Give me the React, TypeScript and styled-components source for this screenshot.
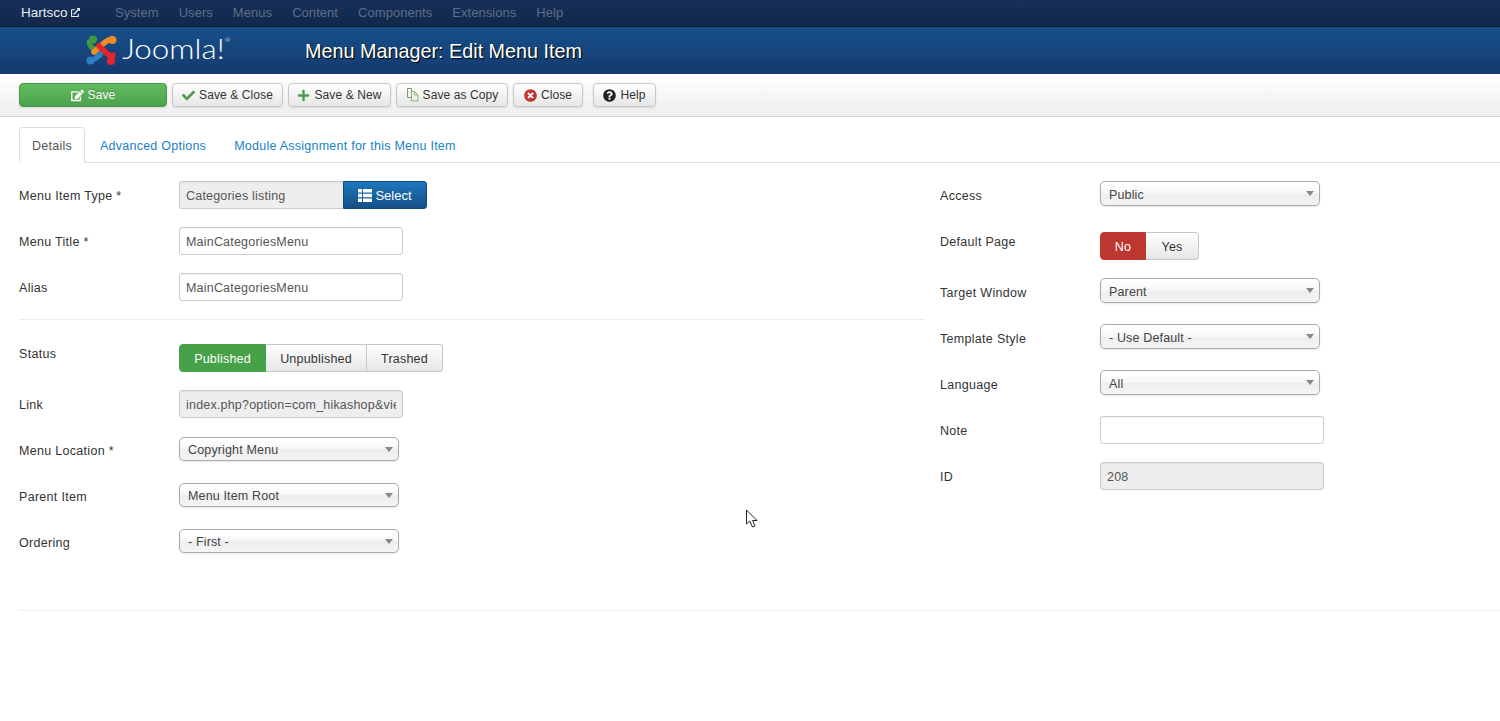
import styled, { createGlobalStyle } from 'styled-components';
import { FaCheck, FaPlus, FaTimesCircle, FaQuestionCircle, FaEdit, FaExternalLinkAlt } from 'react-icons/fa';

const GlobalStyle = createGlobalStyle`
  html, body { margin: 0; padding: 0; background: #fff; }
  body {
    font-family: "Liberation Sans", Arial, sans-serif;
    font-size: 13px;
    color: #333;
  }
`;

const Page = styled.div`
  position: relative;
  height: 721px;
  overflow: hidden;
`;

const TopNav = styled.nav`
  box-sizing: border-box;
  height: 27px;
  display: flex;
  align-items: center;
  padding: 0 0 2px 21px;
  background: linear-gradient(#16305a, #12284a);
  border-bottom: 1px solid #0b1a33;
`;

const Brand = styled.a`
  display: flex;
  align-items: center;
  gap: 3px;
  width: 94px;
  font-size: 13.5px;
  color: #e8edf3;
`;

const NavItem = styled.a`
  margin-right: 20px;
  font-size: 13px;
  letter-spacing: 0.05px;
  color: #5e6e86;
`;

const Header = styled.header`
  height: 47px;
  display: flex;
  align-items: center;
  padding-left: 85px;
  background: linear-gradient(#17508a, #153a6e);
`;

const Logo = styled.div`
  width: 220px;
  display: flex;
  align-items: center;
  gap: 4px;
  color: #fff;
  padding-bottom: 1px;
`;

const Wordmark = styled.span`
  display: inline-block;
  font-family: Lato, "Open Sans", sans-serif;
  font-weight: 300;
  font-size: 28px;
  line-height: 1;
  margin-bottom: 5px;
  transform: scaleX(1.12);
  transform-origin: left center;
`;

const Registered = styled.sup`
  font-size: 6px;
  vertical-align: 17px;
  line-height: 0;
`;

const PageTitle = styled.h1`
  margin: 2px 0 0;
  font-size: 19.8px;
  font-weight: 400;
  color: #fff;
  text-shadow: 1px 1px 1px #000;
`;

const Toolbar = styled.div`
  height: 42px;
  display: flex;
  align-items: center;
  padding: 0 0 0 19px;
  background: linear-gradient(#fff, #eee);
  border-bottom: 1px solid #d4d4d4;
`;

const ToolButton = styled.button<{ $w: number; $after?: number }>`
  box-sizing: border-box;
  width: ${(p) => p.$w}px;
  height: 24px;
  margin-right: ${(p) => p.$after ?? 5}px;
  display: flex;
  align-items: center;
  justify-content: center;
  gap: 4px;
  padding: 0;
  font: 12px "Liberation Sans", Arial, sans-serif;
  letter-spacing: 0.1px;
  color: #333;
  background: linear-gradient(#fff, #e6e6e6);
  border: 1px solid #c8c8c8;
  border-radius: 4px;
  box-shadow: 0 1px 2px rgba(0, 0, 0, 0.1);
`;

const SaveButton = styled(ToolButton)`
  color: #fff;
  background: linear-gradient(#62bb5f, #4aa24c);
  border-color: #46964a;
  text-shadow: 0 -1px 0 rgba(0, 0, 0, 0.2);
`;

const Tabs = styled.div`
  height: 35px;
  margin: 10px 0 18px 19px;
  display: flex;
  border-bottom: 1px solid #ddd;
`;

const Tab = styled.a<{ $active?: boolean }>`
  box-sizing: border-box;
  height: ${(p) => (p.$active ? 36 : 35)}px;
  display: flex;
  align-items: center;
  padding: ${(p) => (p.$active ? '1px 12px 0' : '2px 14px 0')};
  margin-right: ${(p) => (p.$active ? 1 : 0)}px;
  font-size: 12.5px;
  letter-spacing: 0.25px;
  color: ${(p) => (p.$active ? '#555' : '#1a7fc9')};
  background: ${(p) => (p.$active ? '#fff' : 'transparent')};
  border: ${(p) => (p.$active ? '1px solid #ddd' : 'none')};
  border-bottom: ${(p) => (p.$active ? '1px solid #fff' : 'none')};
  border-radius: 4px 4px 0 0;
`;

const Columns = styled.div`
  display: grid;
  grid-template-columns: 906px 1fr;
  column-gap: 15px;
  margin-left: 19px;
`;

const Column = styled.div``;

const Row = styled.div<{ $after?: number }>`
  display: flex;
  min-height: 28px;
  margin-bottom: ${(p) => p.$after ?? 18}px;
`;

const Label = styled.label<{ $tight?: boolean }>`
  width: 160px;
  flex: none;
  padding-top: ${(p) => (p.$tight ? 3 : 8)}px;
  font-size: 12.5px;
  line-height: 14px;
  letter-spacing: 0.3px;
  color: #333;
`;

const Input = styled.input<{ $w?: number }>`
  box-sizing: border-box;
  width: ${(p) => p.$w ?? 224}px;
  height: 28px;
  padding: 1px 6px 0;
  font: 12.5px "Liberation Sans", Arial, sans-serif;
  letter-spacing: 0.2px;
  color: #555;
  background: #fff;
  border: 1px solid #ccc;
  border-radius: 3px;
  box-shadow: inset 0 1px 1px rgba(0, 0, 0, 0.05);
  outline: none;

  &:disabled {
    background: #eee;
    color: #555;
    opacity: 1;
  }
`;

const InputGroup = styled.div`
  display: flex;
`;

const AddOn = styled(Input)`
  width: 164px;
  border-right: 0;
  border-radius: 3px 0 0 3px;
`;

const SelectButton = styled.button`
  box-sizing: border-box;
  width: 84px;
  height: 28px;
  padding: 0;
  display: flex;
  align-items: center;
  justify-content: center;
  gap: 3px;
  font: 13px "Liberation Sans", Arial, sans-serif;
  color: #fff;
  background: linear-gradient(#1e77bd, #154f86);
  border: 1px solid #134a7c;
  border-radius: 0 3px 3px 0;
`;

const Select = styled.div<{ $compact?: boolean }>`
  box-sizing: border-box;
  position: relative;
  width: 220px;
  height: ${(p) => (p.$compact ? 24 : 25)}px;
  margin-top: ${(p) => (p.$compact ? 1 : 0)}px;
  padding: ${(p) => (p.$compact ? '1px 8px 0' : '2px 8px 0')};
  display: flex;
  align-items: center;
  font-size: 12.5px;
  letter-spacing: 0.15px;
  color: #444;
  background: linear-gradient(#fff 10%, #f6f6f6 50%, #eee 52%, #f4f4f4);
  border: 1px solid #aaa;
  border-radius: 5px;
  box-shadow: 0 1px 2px rgba(0, 0, 0, 0.1);

  &::after {
    content: '';
    position: absolute;
    right: 5px;
    top: 9px;
    border-left: 4px solid transparent;
    border-right: 4px solid transparent;
    border-top: 5px solid #888;
  }
`;

const Segmented = styled.div`
  display: flex;
  height: 28px;
`;

const Segment = styled.button<{ $w: number; $tone?: 'green' | 'red' }>`
  box-sizing: border-box;
  width: ${(p) => p.$w}px;
  padding: 2px 0 0;
  font: 12.5px "Liberation Sans", Arial, sans-serif;
  letter-spacing: 0.2px;
  color: ${(p) => (p.$tone ? '#fff' : '#333')};
  background: ${(p) =>
    p.$tone === 'green'
      ? '#46a149'
      : p.$tone === 'red'
        ? '#bd362f'
        : 'linear-gradient(#fff, #e6e6e6)'};
  border: 1px solid ${(p) => (p.$tone === 'green' ? '#46a149' : p.$tone === 'red' ? '#bd362f' : '#c8c8c8')};
  border-left-width: ${(p) => (p.$tone ? 1 : 0)}px;
  &:first-child { border-radius: 4px 0 0 4px; }
  &:last-child { border-radius: 0 4px 4px 0; }
`;

const Rule = styled.hr<{ $top: number; $bottom: number }>`
  margin: ${(p) => p.$top}px 0 ${(p) => p.$bottom}px;
  border: 0;
  border-top: 1px solid #eee;
`;

const BottomRule = styled(Rule)`
  margin-left: 19px;
`;

const Cursor = styled.svg`
  position: absolute;
  left: 745px;
  top: 509px;
`;

const JoomlaMark = () => (
  <svg width="33" height="33" viewBox="0 0 33 33" fill="none" strokeLinecap="round" strokeLinejoin="round">
    <g strokeWidth="5.5">
      <path d="M4.500 8 C4.500 12 6 13 15 21" stroke="#3f9a3e" />
      <circle cx="8" cy="5.500" r="4" fill="#3f9a3e" stroke="none" />
      <path d="M26 5 C22 6 18 9 9 18" stroke="#f08a24" />
      <circle cx="27.500" cy="6" r="4" fill="#f08a24" stroke="none" />
      <path d="M5 26 C8 27 12 24 17 18" stroke="#2f7fc6" />
      <circle cx="5.500" cy="26.500" r="4" fill="#2f7fc6" stroke="none" />
      <path d="M28 21 C28 24 25 23 14 12" stroke="#e3262e" />
      <circle cx="26" cy="27" r="4" fill="#e3262e" stroke="none" />
    </g>
  </svg>
);

const CopyIcon = () => (
  <svg width="13" height="14" viewBox="0 0 13 14" fill="none" strokeWidth="1">
    <path d="M5.500 9.500h-4v-9h4v3" stroke="#7d9a6a" />
    <path d="M5.500 3.500h3l3.500 3.500v6h-6.500z" stroke="#8fb27a" />
    <path d="M8.500 3.500v3.500h3.500" stroke="#8fb27a" />
  </svg>
);

const ListIcon = () => (
  <svg width="14" height="13" viewBox="0 0 14 13" fill="#fff">
    <rect x="0" y="0" width="4" height="3.500" />
    <rect x="5" y="0" width="9" height="3.500" />
    <rect x="0" y="4.750" width="4" height="3.500" />
    <rect x="5" y="4.750" width="9" height="3.500" />
    <rect x="0" y="9.500" width="4" height="3.500" />
    <rect x="5" y="9.500" width="9" height="3.500" />
  </svg>
);

const navItems = ['System', 'Users', 'Menus', 'Content', 'Components', 'Extensions', 'Help'];

export default function App() {
  return (
    <Page>
      <GlobalStyle />
      <TopNav>
        <Brand>
          Hartsco
          <FaExternalLinkAlt size={9} />
        </Brand>
        {navItems.map((item) => (
          <NavItem key={item}>{item}</NavItem>
        ))}
      </TopNav>
      <Header>
        <Logo>
          <JoomlaMark />
          <Wordmark>
            Joomla!<Registered>®</Registered>
          </Wordmark>
        </Logo>
        <PageTitle>Menu Manager: Edit Menu Item</PageTitle>
      </Header>
      <Toolbar>
        <SaveButton $w={148}>
          <FaEdit size={13} />
          Save
        </SaveButton>
        <ToolButton $w={111}>
          <FaCheck size={13} color="#4e9c4e" />
          Save &amp; Close
        </ToolButton>
        <ToolButton $w={103}>
          <FaPlus size={13} color="#4e9c4e" />
          Save &amp; New
        </ToolButton>
        <ToolButton $w={112}>
          <CopyIcon />
          Save as Copy
        </ToolButton>
        <ToolButton $w={70} $after={10}>
          <FaTimesCircle size={13} color="#bd362f" />
          Close
        </ToolButton>
        <ToolButton $w={63}>
          <FaQuestionCircle size={13} color="#222" />
          Help
        </ToolButton>
      </Toolbar>
      <Tabs>
        <Tab $active>Details</Tab>
        <Tab>Advanced Options</Tab>
        <Tab>Module Assignment for this Menu Item</Tab>
      </Tabs>
      <Columns>
        <Column>
          <Row>
            <Label>Menu Item Type *</Label>
            <InputGroup>
              <AddOn disabled value="Categories listing" />
              <SelectButton>
                <ListIcon />
                Select
              </SelectButton>
            </InputGroup>
          </Row>
          <Row>
            <Label>Menu Title *</Label>
            <Input readOnly value="MainCategoriesMenu" />
          </Row>
          <Row $after={0}>
            <Label>Alias</Label>
            <Input readOnly value="MainCategoriesMenu" />
          </Row>
          <Rule $top={18} $bottom={24} />
          <Row>
            <Label $tight>Status</Label>
            <Segmented>
              <Segment $w={87} $tone="green">Published</Segment>
              <Segment $w={101}>Unpublished</Segment>
              <Segment $w={76}>Trashed</Segment>
            </Segmented>
          </Row>
          <Row>
            <Label>Link</Label>
            <Input disabled value="index.php?option=com_hikashop&view=category&layout=listing" />
          </Row>
          <Row>
            <Label>Menu Location *</Label>
            <Select $compact>Copyright Menu</Select>
          </Row>
          <Row>
            <Label>Parent Item</Label>
            <Select $compact>Menu Item Root</Select>
          </Row>
          <Row $after={0}>
            <Label>Ordering</Label>
            <Select $compact>- First -</Select>
          </Row>
        </Column>
        <Column>
          <Row $after={23}>
            <Label>Access</Label>
            <Select>Public</Select>
          </Row>
          <Row>
            <Label $tight>Default Page</Label>
            <Segmented>
              <Segment $w={46} $tone="red">No</Segment>
              <Segment $w={53}>Yes</Segment>
            </Segmented>
          </Row>
          <Row>
            <Label>Target Window</Label>
            <Select>Parent</Select>
          </Row>
          <Row>
            <Label>Template Style</Label>
            <Select>- Use Default -</Select>
          </Row>
          <Row>
            <Label>Language</Label>
            <Select>All</Select>
          </Row>
          <Row>
            <Label>Note</Label>
            <Input readOnly value="" />
          </Row>
          <Row $after={0}>
            <Label>ID</Label>
            <Input disabled value="208" />
          </Row>
        </Column>
      </Columns>
      <BottomRule $top={54} $bottom={0} />
      <Cursor width="14" height="20" viewBox="0 0 14 20">
        <path d="M1.500 1 V15 L4.800 12 L7.500 18 L10 17 L7.600 11.500 H12 Z" fill="#fff" stroke="#222" strokeWidth="1" />
      </Cursor>
    </Page>
  );
}
